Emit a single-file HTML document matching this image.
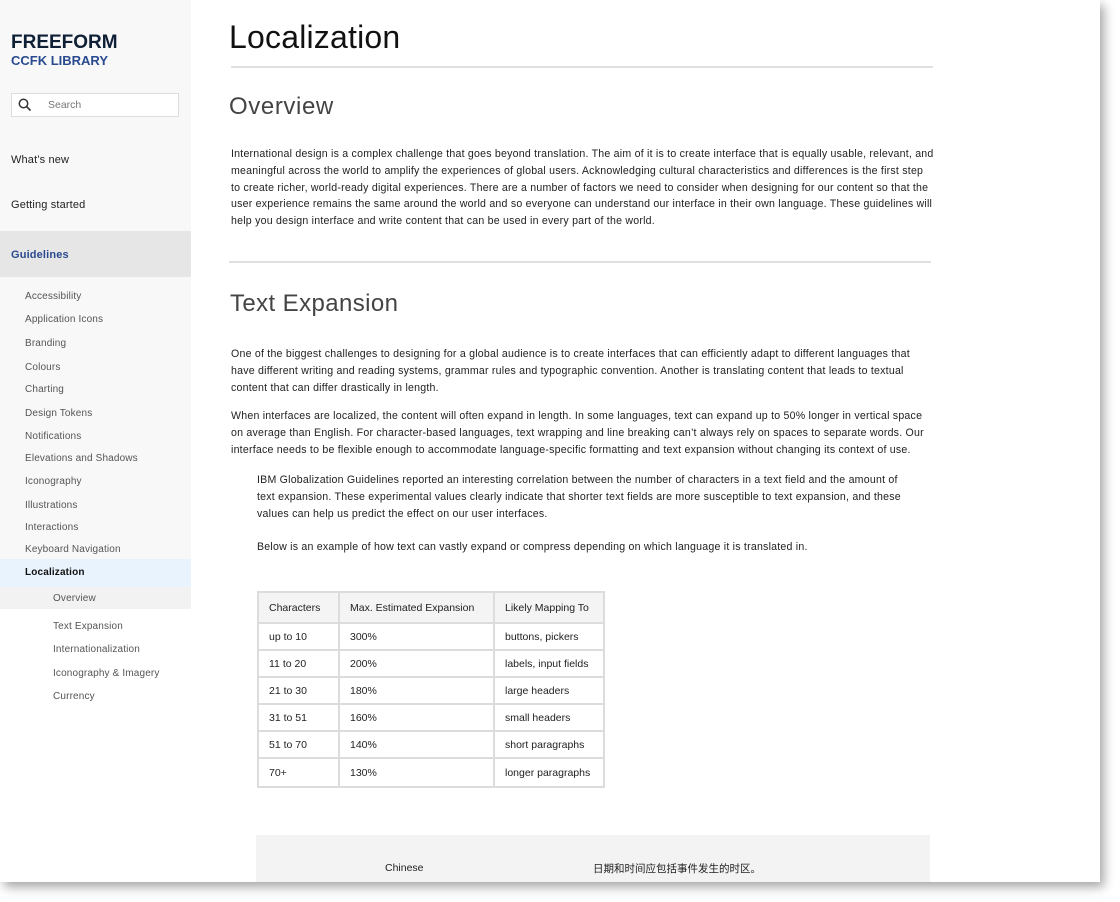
<!DOCTYPE html>
<html><head><meta charset="utf-8"><style>
*{margin:0;padding:0;box-sizing:border-box}
body{width:1120px;height:902px;background:#fff;font-family:"Liberation Sans","Noto Sans CJK SC",sans-serif;position:relative;overflow:hidden;color:#1a1a1a}
#win{position:absolute;left:0;top:0;width:1100px;height:882px;background:#fff;box-shadow:4px 5px 10px rgba(0,0,0,.35);overflow:hidden}
#side{position:absolute;left:0;top:0;width:191px;height:882px;background:#f8f8f8}
.a{position:absolute;white-space:nowrap}
.nav{font-size:11px;color:#222;letter-spacing:.15px}
.sub{font-size:10px;color:#555;letter-spacing:.15px}
.p{font-size:10.6px;line-height:16.8px;color:#222;letter-spacing:.22px}
h1,h2{font-weight:normal}
table{position:absolute;left:257px;top:591px;border-collapse:collapse;font-size:10.5px;color:#222}
td{border:2px solid #dcdcdc;padding:0 10px;height:27px}
tr.h td{background:#f4f4f4;height:31px}
</style></head><body>
<div id="win">
<div id="side">
<div class="a" style="left:11px;top:32px;font-size:19px;font-weight:bold;color:#0f1f35">FREEFORM</div>
<div class="a" style="left:11px;top:53px;font-size:13px;font-weight:bold;color:#2a4a8f">CCFK LIBRARY</div>
<div class="a" style="left:11px;top:93px;width:168px;height:24px;background:#fff;border:1px solid #ddd">
<svg style="position:absolute;left:6px;top:4px" width="14" height="14" viewBox="0 0 14 14"><circle cx="5.5" cy="5.5" r="4.2" fill="none" stroke="#333" stroke-width="1.5"/><path d="M8.6 8.6L12.5 12.5" stroke="#333" stroke-width="1.6"/></svg>
<span style="position:absolute;left:36px;top:5px;font-size:10.5px;color:#777">Search</span></div>
<div class="a nav" style="left:11px;top:154px">What’s new</div>
<div class="a nav" style="left:11px;top:199px">Getting started</div>
<div class="a" style="left:0;top:231px;width:191px;height:46px;background:#e6e6e6"></div>
<div class="a nav" style="left:11px;top:249px;font-weight:bold;color:#2a4a8f">Guidelines</div>
<div class="a sub" style="left:25px;top:291px">Accessibility</div>
<div class="a sub" style="left:25px;top:314px">Application Icons</div>
<div class="a sub" style="left:25px;top:338px">Branding</div>
<div class="a sub" style="left:25px;top:362px">Colours</div>
<div class="a sub" style="left:25px;top:384px">Charting</div>
<div class="a sub" style="left:25px;top:408px">Design Tokens</div>
<div class="a sub" style="left:25px;top:431px">Notifications</div>
<div class="a sub" style="left:25px;top:453px">Elevations and Shadows</div>
<div class="a sub" style="left:25px;top:476px">Iconography</div>
<div class="a sub" style="left:25px;top:500px">Illustrations</div>
<div class="a sub" style="left:25px;top:522px">Interactions</div>
<div class="a sub" style="left:25px;top:544px">Keyboard Navigation</div>
<div class="a" style="left:0;top:559px;width:191px;height:28px;background:#e8f3fd"></div>
<div class="a sub" style="left:25px;top:567px;font-weight:bold;color:#111">Localization</div>
<div class="a" style="left:0;top:587px;width:191px;height:22px;background:#f2f2f2"></div>
<div class="a sub" style="left:53px;top:593px">Overview</div>
<div class="a" style="left:0;top:609px;width:191px;height:273px;background:#fff"></div>
<div class="a sub" style="left:53px;top:621px">Text Expansion</div>
<div class="a sub" style="left:53px;top:644px">Internationalization</div>
<div class="a sub" style="left:53px;top:668px">Iconography &amp; Imagery</div>
<div class="a sub" style="left:53px;top:691px">Currency</div>
</div>
<h1 class="a" style="left:229px;top:19px;font-size:32px;color:#111;letter-spacing:.2px">Localization</h1>
<div class="a" style="left:231px;top:66px;width:702px;height:2px;background:#e0e0e0"></div>
<h2 class="a" style="left:229px;top:93px;font-size:24px;color:#444;letter-spacing:.6px">Overview</h2>
<div class="a p" style="left:231px;top:146px">International design is a complex challenge that goes beyond translation. The aim of it is to create interface that is equally usable, relevant, and<br>meaningful across the world to amplify the experiences of global users. Acknowledging cultural characteristics and differences is the first step<br>to create richer, world-ready digital experiences. There are a number of factors we need to consider when designing for our content so that the<br>user experience remains the same around the world and so everyone can understand our interface in their own language. These guidelines will<br>help you design interface and write content that can be used in every part of the world.</div>
<div class="a" style="left:229px;top:261px;width:702px;height:2px;background:#e0e0e0"></div>
<h2 class="a" style="left:230px;top:290px;font-size:24px;color:#444;letter-spacing:.4px">Text Expansion</h2>
<div class="a p" style="left:231px;top:346px">One of the biggest challenges to designing for a global audience is to create interfaces that can efficiently adapt to different languages that<br>have different writing and reading systems, grammar rules and typographic convention. Another is translating content that leads to textual<br>content that can differ drastically in length.</div>
<div class="a p" style="left:231px;top:408px">When interfaces are localized, the content will often expand in length. In some languages, text can expand up to 50% longer in vertical space<br>on average than English. For character-based languages, text wrapping and line breaking can’t always rely on spaces to separate words. Our<br>interface needs to be flexible enough to accommodate language-specific formatting and text expansion without changing its context of use.</div>
<div class="a p" style="left:257px;top:472px">IBM Globalization Guidelines reported an interesting correlation between the number of characters in a text field and the amount of<br>text expansion. These experimental values clearly indicate that shorter text fields are more susceptible to text expansion, and these<br>values can help us predict the effect on our user interfaces.</div>
<div class="a p" style="left:257px;top:539px">Below is an example of how text can vastly expand or compress depending on which language it is translated in.</div>
<table>
<tr class="h"><td style="width:81px">Characters</td><td style="width:155px">Max. Estimated Expansion</td><td style="width:110px">Likely Mapping To</td></tr>
<tr><td>up to 10</td><td>300%</td><td>buttons, pickers</td></tr>
<tr><td>11 to 20</td><td>200%</td><td>labels, input fields</td></tr>
<tr><td>21 to 30</td><td>180%</td><td>large headers</td></tr>
<tr><td>31 to 51</td><td>160%</td><td>small headers</td></tr>
<tr><td>51 to 70</td><td>140%</td><td>short paragraphs</td></tr>
<tr><td style="height:29px">70+</td><td>130%</td><td>longer paragraphs</td></tr>
</table>
<div class="a" style="left:256px;top:835px;width:674px;height:47px;background:#f3f3f3"></div>
<div class="a" style="left:385px;top:862px;font-size:10.5px;color:#222">Chinese</div>
<div class="a" style="left:593px;top:861px;font-size:10.5px;color:#222">日期和时间应包括事件发生的时区。</div>
</div>
</body></html>
